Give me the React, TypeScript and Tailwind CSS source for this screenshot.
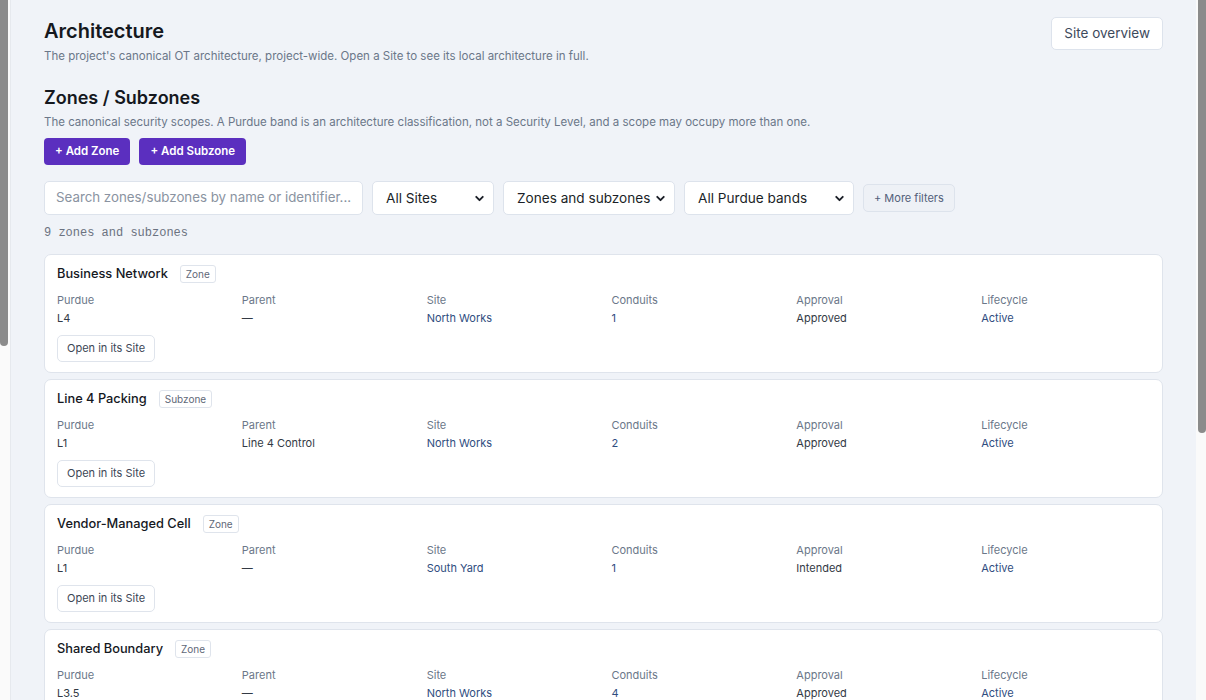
import { ChevronDown } from 'lucide-react'

type Scope = {
  name: string
  kind: 'Zone' | 'Subzone'
  purdue: string
  parent: string
  site: string
  conduits: number
  approval: string
  lifecycle: string
}

const scopes: Scope[] = [
  { name: 'Business Network', kind: 'Zone', purdue: 'L4', parent: '—', site: 'North Works', conduits: 1, approval: 'Approved', lifecycle: 'Active' },
  { name: 'Line 4 Packing', kind: 'Subzone', purdue: 'L1', parent: 'Line 4 Control', site: 'North Works', conduits: 2, approval: 'Approved', lifecycle: 'Active' },
  { name: 'Vendor-Managed Cell', kind: 'Zone', purdue: 'L1', parent: '—', site: 'South Yard', conduits: 1, approval: 'Intended', lifecycle: 'Active' },
  { name: 'Shared Boundary', kind: 'Zone', purdue: 'L3.5', parent: '—', site: 'North Works', conduits: 4, approval: 'Approved', lifecycle: 'Active' },
  { name: 'Line 4 Control', kind: 'Zone', purdue: 'L2', parent: '—', site: 'North Works', conduits: 3, approval: 'Approved', lifecycle: 'Active' },
]

function Field({ label, value, link }: { label: string; value: string; link?: boolean }) {
  return (
    <div className="flex flex-col gap-[4px]">
      <span className="text-[11px] leading-[14px] text-[#6b7789]">{label}</span>
      <span className={`text-[11px] leading-[14px] ${link ? 'text-[#2f4d80]' : 'text-[#333a45]'}`}>{value}</span>
    </div>
  )
}

function SelectBox({ label, width }: { label: string; width: string }) {
  return (
    <div className={`${width} h-[34px] shrink-0 flex items-center justify-between pl-[13px] pr-[7px] bg-white border border-[#dde3ec] rounded-[5px] text-[13.6px] text-[#1b1f27] whitespace-nowrap`}>
      <span>{label}</span>
      <ChevronDown className="h-[13px] w-[13px] shrink-0 text-[#1b1f27]" strokeWidth={3.5} />
    </div>
  )
}

function ScopeCard({ scope }: { scope: Scope }) {
  return (
    <div className="h-[119px] bg-white border border-[#dfe4ec] rounded-[7px] px-[12px] pt-[10px] flex flex-col">
      <div className="flex items-center gap-[12px] h-[18px]">
        <span className="text-[12.8px] font-medium text-[#15181e]">{scope.name}</span>
        <span className="h-[18px] px-[5px] flex items-center border border-[#dfe4ec] rounded-[3px] text-[10px] text-[#5f6878]">{scope.kind}</span>
      </div>
      <div className="grid grid-cols-6 gap-x-4 mt-[10px]">
        <Field label="Purdue" value={scope.purdue} />
        <Field label="Parent" value={scope.parent} />
        <Field label="Site" value={scope.site} link />
        <Field label="Conduits" value={String(scope.conduits)} link />
        <Field label="Approval" value={scope.approval} />
        <Field label="Lifecycle" value={scope.lifecycle} link />
      </div>
      <div className="mt-[9px]">
        <button className="h-[27px] px-[9px] border border-[#dfe4ec] rounded-[5px] bg-white text-[11px] text-[#3c4756]">
          Open in its Site
        </button>
      </div>
    </div>
  )
}

export default function App() {
  return (
    <div className="flex h-[700px] overflow-hidden bg-[#f0f3f8]" style={{ fontFamily: 'Inter, "Noto Sans", sans-serif' }}>
      {/* sidebar scrollbar peeking in on the left */}
      <div className="w-[11px] shrink-0 bg-[#fafafa] border-r border-[#e6e9ee]">
        <div className="w-[8px] h-[346px] bg-[#8b8b8b] rounded-b-[4px]" />
      </div>

      <main className="flex-1 min-w-0 px-[33px] pt-[18px]">
        <div className="flex items-start justify-between">
          <div>
            <h1 className="text-[20px] leading-[26px] font-semibold text-[#15181e]">Architecture</h1>
            <p className="mt-[4px] text-[11.5px] leading-[16px] text-[#6b7789]">
              The project's canonical OT architecture, project-wide. Open a Site to see its local architecture in full.
            </p>
          </div>
          <button className="h-[33px] px-[12px] mt-[-1px] bg-white border border-[#dde3ec] rounded-[5px] text-[13.5px] text-[#3d4a5c]">
            Site overview
          </button>
        </div>

        <h2 className="mt-[22px] text-[18px] leading-[24px] font-semibold text-[#15181e]">Zones / Subzones</h2>
        <p className="mt-[4px] text-[11.5px] leading-[16px] text-[#6b7789]">
          The canonical security scopes. A Purdue band is an architecture classification, not a Security Level, and a scope may occupy more than one.
        </p>

        <div className="flex gap-[9px] mt-[8px]">
          <button className="h-[27px] px-[11px] rounded-[4px] bg-[#5b2fbf] text-white text-[11.5px] font-semibold">+ Add Zone</button>
          <button className="h-[27px] px-[11px] rounded-[4px] bg-[#5b2fbf] text-white text-[11.5px] font-semibold">+ Add Subzone</button>
        </div>

        <div className="flex items-center gap-[9px] mt-[16px]">
          <div className="w-[319px] h-[34px] shrink-0 flex items-center px-[11px] bg-white border border-[#dde3ec] rounded-[5px] text-[13.3px] text-[#8a93a1] whitespace-nowrap overflow-hidden">
            Search zones/subzones by name or identifier...
          </div>
          <SelectBox label="All Sites" width="w-[122px]" />
          <SelectBox label="Zones and subzones" width="w-[172px]" />
          <SelectBox label="All Purdue bands" width="w-[170px]" />
          <button className="h-[28px] px-[10px] bg-[#eef1f6] border border-[#dde3ec] rounded-[5px] text-[11px] text-[#52607a]">
            + More filters
          </button>
        </div>

        <p className="mt-[10px] text-[12px] leading-[16px] text-[#6b7280]" style={{ fontFamily: '"Liberation Mono", monospace' }}>
          9 zones and subzones
        </p>

        <div className="flex flex-col gap-[6px] mt-[13px]">
          {scopes.map((s) => (
            <ScopeCard key={s.name} scope={s} />
          ))}
        </div>
      </main>

      {/* page scrollbar */}
      <div className="w-[10px] shrink-0 bg-[#fafafa]">
        <div className="ml-[2px] w-[8px] h-[433px] bg-[#8b8b8b] rounded-b-[4px]" />
      </div>
    </div>
  )
}
